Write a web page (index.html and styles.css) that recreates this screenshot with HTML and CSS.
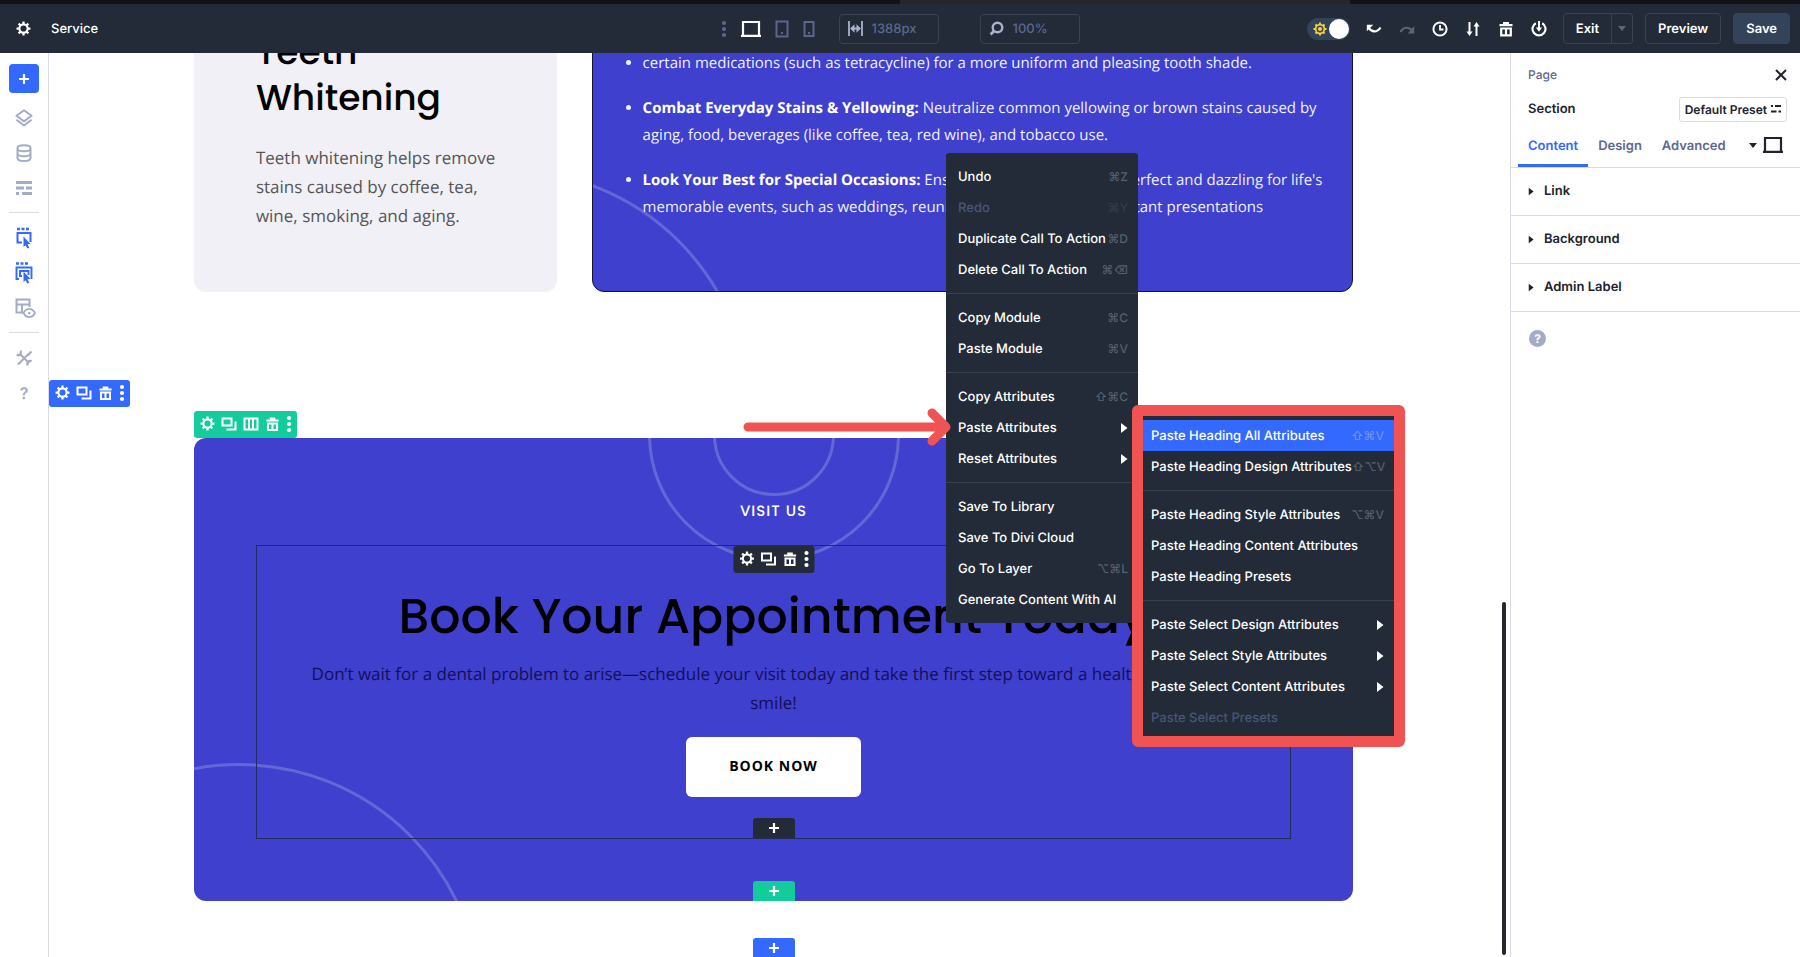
FILE: index.html
```html
<!DOCTYPE html>
<html lang="en">
<head>
    <meta charset="UTF-8">
    <meta name="viewport" content="width=device-width, initial-scale=1.0">
    <title>Service</title>
    <link rel="stylesheet" href="styles.css">
</head>
<body>
    <!-- Icon set -->
    <svg class="sprite" aria-hidden="true">
        <symbol id="gear" viewBox="0 0 16 16">
            <circle cx="8" cy="8" r="4.4" fill="none" stroke="currentColor" stroke-width="2.2"/>
            <path d="M8 .6v2.6M8 12.8v2.6M.6 8h2.6M12.8 8h2.6M2.8 2.8l1.8 1.8M11.4 11.4l1.8 1.8M13.2 2.8l-1.8 1.8M4.6 11.4l-1.8 1.8" stroke="currentColor" stroke-width="2.4"/>
        </symbol>
        <symbol id="copy" viewBox="0 0 16 16">
            <path d="M1.5 2.5h9v7h-9zM5.5 13.5h9V5.5" fill="none" stroke="currentColor" stroke-width="2"/>
        </symbol>
        <symbol id="trash" viewBox="0 0 16 16">
            <path d="M1.5 4.2h13M5 2.2h6M3.2 7.5h9.6v6.8H3.2zM8 7.5v6.8" fill="none" stroke="currentColor" stroke-width="2.2"/>
        </symbol>
        <symbol id="columns" viewBox="0 0 16 16">
            <path d="M1.5 2.5h13v11h-13zM6 2.5v11M10 2.5v11" fill="none" stroke="currentColor" stroke-width="2"/>
        </symbol>
        <symbol id="dots" viewBox="0 0 6 18">
            <circle cx="3" cy="3" r="2.1" fill="currentColor"/>
            <circle cx="3" cy="9" r="2.1" fill="currentColor"/>
            <circle cx="3" cy="15" r="2.1" fill="currentColor"/>
        </symbol>
        <symbol id="plus" viewBox="0 0 12 12">
            <path d="M6 1v10M1 6h10" stroke="currentColor" stroke-width="2.2"/>
        </symbol>
        <symbol id="laptop" viewBox="0 0 20 18">
            <path d="M2 15V2h16v13M0 15.8h20" fill="none" stroke="currentColor" stroke-width="2.2"/>
        </symbol>
        <symbol id="caret" viewBox="0 0 8 10">
            <path d="M1 0l6.500 5L1 10z" fill="currentColor"/>
        </symbol>
    </svg>

    <div class="browser-strip"><span class="browser-tab"></span></div>

    <header class="topbar">
        <div class="topbar-left">
            <button class="icon-btn" aria-label="Settings"><svg width="15" height="15"><use href="#gear"/></svg></button>
            <span class="page-name">Service</span>
        </div>

        <div class="topbar-center">
            <div class="devices">
                <button class="icon-btn muted" aria-label="More"><svg width="6" height="18"><use href="#dots"/></svg></button>
                <button class="icon-btn" aria-label="Desktop"><svg width="20" height="18"><use href="#laptop"/></svg></button>
                <button class="icon-btn muted" aria-label="Tablet">
                    <svg width="14" height="18" viewBox="0 0 14 18"><path d="M1.500 1.500h11v15h-11z" fill="none" stroke="currentColor" stroke-width="2"/><path d="M6 13h2" stroke="currentColor" stroke-width="2"/></svg>
                </button>
                <button class="icon-btn muted" aria-label="Phone">
                    <svg width="12" height="18" viewBox="0 0 12 18"><path d="M1.500 2h9v14h-9z" fill="none" stroke="currentColor" stroke-width="2"/><path d="M5 13h2" stroke="currentColor" stroke-width="2"/></svg>
                </button>
            </div>
            <label class="field">
                <svg width="15" height="15" viewBox="0 0 15 15"><path d="M1 0v15M14 0v15M3 7.500h9" stroke="currentColor" stroke-width="1.800"/><path d="M6.500 3.200v8.600L2.200 7.500zM8.500 3.200v8.600l4.300-4.300z" fill="currentColor"/></svg>
                <input type="text" value="1388px" aria-label="Canvas width">
            </label>
            <label class="field zoom-field">
                <svg width="15" height="15" viewBox="0 0 15 15"><circle cx="8.500" cy="6.500" r="4.800" fill="none" stroke="currentColor" stroke-width="2.400"/><path d="M5.200 9.800L1.600 13.400" stroke="currentColor" stroke-width="2.800"/></svg>
                <input type="text" value="100%" aria-label="Zoom">
            </label>
        </div>

        <div class="topbar-right">
            <label class="theme-toggle">
                <input type="checkbox" aria-label="Light mode" checked>
                <svg width="14" height="14" viewBox="0 0 16 16"><circle cx="8" cy="8" r="5" fill="none" stroke="#f5d13a" stroke-width="2"/><circle cx="8" cy="8" r="2.4" fill="#f5d13a"/><path d="M8 .6v2.6M8 12.8v2.6M.6 8h2.6M12.8 8h2.6M2.8 2.8l1.8 1.8M11.4 11.4l1.8 1.8M13.2 2.8l-1.8 1.8M4.6 11.4l-1.8 1.8" stroke="#f5d13a" stroke-width="2.2"/></svg>
            </label>
            <div class="actions">
                <button class="icon-btn" aria-label="Undo"><svg width="16" height="16" viewBox="0 0 16 16"><path d="M2.500 6.500c3 5 8.500 5.500 12 0" fill="none" stroke="currentColor" stroke-width="2.300"/><path d="M.8 3.800h6.500L.8 10.300z" fill="currentColor"/></svg></button>
                <button class="icon-btn faded" aria-label="Redo"><svg width="16" height="16" viewBox="0 0 16 16"><path d="M1.500 11c3-5.500 8.500-5.500 12-1" fill="none" stroke="currentColor" stroke-width="2.200"/><path d="M15.200 5v7.500H8.700z" fill="currentColor"/></svg></button>
                <button class="icon-btn" aria-label="History"><svg width="16" height="16" viewBox="0 0 16 16"><circle cx="8" cy="8" r="6.600" fill="none" stroke="currentColor" stroke-width="2"/><path d="M8 4v4.500h3.500" fill="none" stroke="currentColor" stroke-width="1.800"/></svg></button>
                <button class="icon-btn" aria-label="Portability"><svg width="16" height="16" viewBox="0 0 16 16"><path d="M4.500 1v11M11.500 15V4" stroke="currentColor" stroke-width="2"/><path d="M1.500 10.500h6l-3 4.500zM8.500 5.500h6l-3-4.500z" fill="currentColor"/></svg></button>
                <button class="icon-btn" aria-label="Clear layout"><svg width="16" height="16"><use href="#trash"/></svg></button>
                <button class="icon-btn" aria-label="Power"><svg width="16" height="16" viewBox="0 0 16 16"><path d="M4.800 2.200a6.500 6.500 0 1 0 6.400 0" fill="none" stroke="currentColor" stroke-width="2.200"/><path d="M8 0v8" stroke="currentColor" stroke-width="2"/><path d="M4.800 6.500h6.400L8 10.800z" fill="currentColor"/></svg></button>
            </div>
            <div class="split-btn">
                <button class="bar-btn">Exit</button>
                <button class="bar-btn arrow-btn" aria-label="Exit options"><svg width="8" height="5" viewBox="0 0 8 5"><path d="M0 0h8L4 5z" fill="currentColor"/></svg></button>
            </div>
            <button class="bar-btn">Preview</button>
            <button class="bar-btn save-btn">Save</button>
        </div>
    </header>

    <div class="workspace">
        <nav class="sidebar">
            <button class="add-btn" aria-label="Add"><svg width="12" height="12"><use href="#plus"/></svg></button>
            <div class="side-group">
                <button class="icon-btn" aria-label="Layers"><svg width="18" height="18" viewBox="0 0 18 18"><path d="M9 1.200l7.500 5.600L9 12.400 1.500 6.800zM1.500 10.800L9 16.500l7.500-5.700" fill="none" stroke="currentColor" stroke-width="2" stroke-linejoin="round"/></svg></button>
                <button class="icon-btn" aria-label="Data"><svg width="18" height="18" viewBox="0 0 18 18"><path d="M2.500 4v10c0 4 13 4 13 0V4c0-3.700-13-3.700-13 0zM2.500 5c1 3 12 3 13 0M2.500 10c1 3 12 3 13 0" fill="none" stroke="currentColor" stroke-width="2"/></svg></button>
                <button class="icon-btn" aria-label="Presets"><svg width="18" height="18" viewBox="0 0 18 18"><path d="M1 3.500h16M1 9h8M11 9h6M1 14.500h3M7 14.500h10" stroke="currentColor" stroke-width="3"/></svg></button>
            </div>
            <hr>
            <div class="side-group">
                <button class="icon-btn active" aria-label="Select element"><svg width="18" height="22" viewBox="0 0 18 22"><path d="M2 2h3M6.500 2h3M11 2h3" stroke="currentColor" stroke-width="2.600"/><path d="M7 15.500H2.500V6h13v9" fill="none" stroke="currentColor" stroke-width="2"/><path d="M8.500 9.500l7 7.500-3 .3 1.800 3.400-2 .9-1.700-3.400-2.100 1.700z" fill="currentColor"/></svg></button>
                <button class="icon-btn active" aria-label="Select parent"><svg width="18" height="22" viewBox="0 0 18 22"><path d="M1 1.500h3M5.500 1.500h3M10 1.500h3" stroke="currentColor" stroke-width="2.600"/><path d="M4 17H1.500V5.500h15V17M7 14H5V9h8.500v4" fill="none" stroke="currentColor" stroke-width="1.900"/><path d="M8.500 9.500l7 7.500-3 .3 1.800 3.400-2 .9-1.700-3.400-2.100 1.700z" fill="currentColor"/></svg></button>
                <button class="icon-btn" aria-label="View"><svg width="24" height="22" viewBox="0 0 24 22"><path d="M11 15.500H4.500V2.500h13V10M4.500 7.500h13M10 7.500v8" fill="none" stroke="currentColor" stroke-width="2"/><path d="M11.500 16c3-5.500 8.500-5.500 11.500 0-3 5.500-8.500 5.500-11.500 0z" fill="none" stroke="currentColor" stroke-width="1.800"/><circle cx="17.200" cy="16" r="1.300" fill="currentColor"/></svg></button>
            </div>
            <hr>
            <div class="side-group">
                <button class="icon-btn" aria-label="Tools"><svg width="18" height="18" viewBox="0 0 18 18"><path d="M5 5l9 9M3 15.500L13.500 5" stroke="currentColor" stroke-width="2"/><path d="M1.800 5.500c2 1.500 4.800 0 4-4M16.500 12.500c-2-1.500-4.800 0-4 4M12.500 6.500l4-4" fill="none" stroke="currentColor" stroke-width="2.200"/></svg></button>
                <button class="icon-btn help-btn" aria-label="Help">?</button>
            </div>
        </nav>

        <main class="canvas">
            <section class="services">
                <article class="card">
                    <h3>Teeth Whitening</h3>
                    <p>Teeth whitening helps remove stains caused by coffee, tea, wine, smoking, and aging.</p>
                </article>
                <article class="card card-blue">
                    <span class="ring ring-card"></span>
                    <ul>
                        <li>certain medications (such as tetracycline) for a more uniform and pleasing tooth shade.</li>
                        <li><strong>Combat Everyday Stains &amp; Yellowing:</strong> Neutralize common yellowing or brown stains caused by aging, food, beverages (like coffee, tea, red wine), and tobacco use.</li>
                        <li><strong>Look Your Best for Special Occasions:</strong> Ensure your smile is picture-perfect and dazzling for life's memorable events, such as weddings, reunions, graduations, or important presentations</li>
                    </ul>
                </article>
            </section>

            <section class="booking">
                <div class="tools tools-section">
                    <button aria-label="Section settings"><svg width="15" height="15"><use href="#gear"/></svg></button>
                    <button aria-label="Duplicate section"><svg width="16" height="16"><use href="#copy"/></svg></button>
                    <button aria-label="Delete section"><svg width="15" height="16"><use href="#trash"/></svg></button>
                    <button aria-label="More"><svg width="6" height="18"><use href="#dots"/></svg></button>
                </div>

                <div class="row">
                    <div class="tools tools-row">
                        <button aria-label="Row settings"><svg width="15" height="15"><use href="#gear"/></svg></button>
                        <button aria-label="Duplicate row"><svg width="16" height="16"><use href="#copy"/></svg></button>
                        <button aria-label="Column structure"><svg width="16" height="16"><use href="#columns"/></svg></button>
                        <button aria-label="Delete row"><svg width="15" height="16"><use href="#trash"/></svg></button>
                        <button aria-label="More"><svg width="6" height="18"><use href="#dots"/></svg></button>
                    </div>
                    <div class="rings">
                        <span class="ring ring-small"></span>
                        <span class="ring ring-medium"></span>
                        <span class="ring ring-corner"></span>
                    </div>

                    <p class="eyebrow">VISIT US</p>
                    <div class="module">
                        <div class="tools tools-module">
                            <button aria-label="Module settings"><svg width="15" height="15"><use href="#gear"/></svg></button>
                            <button aria-label="Duplicate module"><svg width="16" height="16"><use href="#copy"/></svg></button>
                            <button aria-label="Delete module"><svg width="15" height="16"><use href="#trash"/></svg></button>
                            <button aria-label="More"><svg width="6" height="18"><use href="#dots"/></svg></button>
                        </div>
                        <h2>Book Your Appointment Today</h2>
                        <p>Don’t wait for a dental problem to arise—schedule your visit today and take the first step toward a healthier, brighter smile!</p>
                        <a class="book-btn" href="#">BOOK NOW</a>
                        <button class="add-tab add-module" aria-label="Add module"><svg width="12" height="12"><use href="#plus"/></svg></button>
                    </div>
                    <button class="add-tab add-row" aria-label="Add row"><svg width="12" height="12"><use href="#plus"/></svg></button>
                </div>
                <button class="add-tab add-section" aria-label="Add section"><svg width="12" height="12"><use href="#plus"/></svg></button>
            </section>

            <div class="scroll-thumb"></div>
        </main>

        <aside class="panel">
            <div class="panel-head">
                <a href="#">Page</a>
                <button class="icon-btn" aria-label="Close"><svg width="12" height="12" viewBox="0 0 12 12"><path d="M1 1l10 10M11 1L1 11" stroke="currentColor" stroke-width="2"/></svg></button>
            </div>
            <div class="panel-title">
                <h1>Section</h1>
                <button class="preset-btn">Default Preset
                    <svg width="10" height="10" viewBox="0 0 10 10"><path d="M0 2h2M4 2h6M0 7.500h5.500M7.500 7.500H10" stroke="currentColor" stroke-width="2"/></svg>
                </button>
            </div>
            <div class="tabs">
                <button class="tab active">Content</button>
                <button class="tab">Design</button>
                <button class="tab">Advanced</button>
                <button class="icon-btn view-btn" aria-label="Breakpoint">
                    <svg width="8" height="5" viewBox="0 0 8 5"><path d="M0 0h8L4 5z" fill="currentColor"/></svg>
                    <svg width="20" height="18"><use href="#laptop"/></svg>
                </button>
            </div>
            <button class="option"><svg width="6" height="9"><use href="#caret"/></svg>Link</button>
            <button class="option"><svg width="6" height="9"><use href="#caret"/></svg>Background</button>
            <button class="option"><svg width="6" height="9"><use href="#caret"/></svg>Admin Label</button>
            <button class="panel-help" aria-label="Help">?</button>
        </aside>
    </div>

    <div class="menu">
        <button>Undo <kbd>⌘Z</kbd></button>
        <button disabled>Redo <kbd>⌘Y</kbd></button>
        <button>Duplicate Call To Action <kbd>⌘D</kbd></button>
        <button>Delete Call To Action <kbd>⌘⌫</kbd></button>
        <hr>
        <button>Copy Module <kbd>⌘C</kbd></button>
        <button>Paste Module <kbd>⌘V</kbd></button>
        <hr>
        <button>Copy Attributes <kbd>⇧⌘C</kbd></button>
        <button>Paste Attributes <svg width="8" height="10"><use href="#caret"/></svg></button>
        <button>Reset Attributes <svg width="8" height="10"><use href="#caret"/></svg></button>
        <hr>
        <button>Save To Library</button>
        <button>Save To Divi Cloud</button>
        <button>Go To Layer <kbd>⌥⌘L</kbd></button>
        <button>Generate Content With AI</button>
    </div>

    <div class="menu submenu">
        <button class="selected">Paste Heading All Attributes <kbd>⇧⌘V</kbd></button>
        <button>Paste Heading Design Attributes <kbd>⇧⌥V</kbd></button>
        <hr>
        <button>Paste Heading Style Attributes <kbd>⌥⌘V</kbd></button>
        <button>Paste Heading Content Attributes</button>
        <button>Paste Heading Presets</button>
        <hr>
        <button>Paste Select Design Attributes <svg width="8" height="10"><use href="#caret"/></svg></button>
        <button>Paste Select Style Attributes <svg width="8" height="10"><use href="#caret"/></svg></button>
        <button>Paste Select Content Attributes <svg width="8" height="10"><use href="#caret"/></svg></button>
        <button disabled>Paste Select Presets</button>
    </div>

    <svg class="arrow" width="208" height="40" viewBox="0 0 208 40" aria-hidden="true">
        <path d="M5 20h196M189 6l14 14-14 14" fill="none" stroke="#f05452" stroke-width="9" stroke-linecap="round" stroke-linejoin="round"/>
    </svg>
</body>
</html>
```
FILE: styles.css
```css
* {
    box-sizing: border-box;
}

body {
    margin: 0;
    height: 100vh;
    display: flex;
    flex-direction: column;
    overflow: hidden;
    position: relative;
    font-family: Inter, "Liberation Sans", sans-serif;
    font-size: 13px;
    font-weight: 500;
    color: #20232b;
    background: #fff;
    text-rendering: geometricPrecision;
}

button,
input {
    font: inherit;
    color: inherit;
    background: none;
    border: 0;
    padding: 0;
    margin: 0;
    text-rendering: inherit;
}

button {
    cursor: pointer;
}

h1, h2, h3, p, ul {
    margin: 0;
}

svg {
    display: block;
    flex: none;
}

.sprite {
    position: absolute;
    width: 0;
    height: 0;
}

.icon-btn {
    display: flex;
    align-items: center;
    justify-content: center;
}

/* Top bar */
.browser-strip {
    height: 4px;
    flex: none;
    background: #121217;
    display: flex;
    justify-content: center;
}

.browser-tab {
    width: 25%;
    margin-left: 25%;
    background: #26262b;
}

.topbar {
    flex: none;
    height: 49px;
    padding: 0 10px;
    background: #222b37;
    color: #fff;
    display: grid;
    grid-template-columns: 1fr auto 1fr;
    align-items: center;
}

.topbar-left {
    display: flex;
    align-items: center;
    gap: 20px;
    padding-left: 6px;
}

.topbar-center {
    display: flex;
    align-items: center;
    gap: 24px;
}

.devices {
    display: flex;
    align-items: center;
    gap: 14px;
}

.muted {
    color: #5b6590;
}

.faded {
    color: #5d6673;
}

.field {
    display: flex;
    align-items: center;
    gap: 9px;
    width: 100px;
    height: 30px;
    padding: 0 8px;
    border: 1px solid #3a434f;
    border-radius: 4px;
    color: #a9b2cc;
}

.field input {
    width: 100%;
    min-width: 0;
    color: #5d6790;
}

.zoom-field {
    margin-left: 17px;
}

.topbar-right {
    display: flex;
    align-items: center;
    justify-content: flex-end;
    gap: 12px;
}

.theme-toggle {
    display: flex;
    align-items: center;
    flex-direction: row-reverse;
    justify-content: space-between;
    width: 43px;
    height: 22px;
    padding: 0 1px 0 6px;
    border-radius: 11px;
    background: #33435a;
}

.theme-toggle input {
    appearance: none;
    width: 20px;
    height: 20px;
    margin: 0;
    border-radius: 50%;
    background: #fff;
}

.actions {
    display: flex;
    gap: 17px;
    margin: 0 4px;
}

.bar-btn {
    height: 31px;
    padding: 0 12px;
    border: 1px solid #3a434f;
    border-radius: 4px;
    font-weight: 600;
}

.split-btn {
    display: flex;
}

.split-btn .bar-btn:first-child {
    border-radius: 4px 0 0 4px;
}

.split-btn .arrow-btn {
    padding: 0 6px;
    border-left: 0;
    border-radius: 0 4px 4px 0;
    color: #5d6673;
}

.save-btn {
    background: #33435a;
    border-color: #33435a;
}

/* Left sidebar */
.workspace {
    flex: 1;
    min-height: 0;
    display: flex;
}

.sidebar {
    flex: none;
    width: 49px;
    padding: 11px 9px 0;
    border-right: 1px solid #d9dbe6;
    color: #a3abc7;
}

.add-btn {
    display: flex;
    align-items: center;
    justify-content: center;
    width: 30px;
    height: 29px;
    margin-bottom: 7px;
    border-radius: 4px;
    background: #3369ff;
    color: #fff;
}

.side-group .icon-btn {
    width: 30px;
    height: 35px;
}

.side-group .active {
    color: #3369ff;
}

.sidebar hr {
    margin: 7px 0;
    border: 0;
    border-top: 1px solid #d9dbe6;
}

.sidebar .help-btn {
    font-size: 16px;
    font-weight: 600;
}

/* Canvas */
.canvas {
    flex: 1;
    min-width: 0;
    position: relative;
    overflow: hidden;
    padding-right: 12px;
    font-family: "Open Sans", "Noto Sans", sans-serif;
    font-weight: 400;
}

.services {
    width: 80%;
    margin: -86px auto 0;
    padding-bottom: 88px;
    display: grid;
    grid-template-columns: 362fr 760fr;
    gap: 35px;
}

.card {
    padding: 62px 50px 62px 62px;
    border-radius: 12px;
    background: #f1f0f6;
}

.card h3 {
    margin-bottom: 22px;
    font-family: Poppins, Inter, sans-serif;
    font-size: 36px;
    line-height: 46px;
    font-weight: 500;
    color: #000;
}

.card p {
    font-size: 17px;
    line-height: 29px;
    color: #555;
}

.card-blue {
    position: relative;
    overflow: hidden;
    display: flex;
    align-items: flex-end;
    padding: 0 24px 70px 50px;
    border: 1px solid #14123a;
    background: #3f40ce;
    color: #f0f0ff;
}

.card-blue ul {
    position: relative;
    padding: 0;
    font-size: 15px;
    line-height: 27px;
}

.card-blue li + li {
    margin-top: 18px;
}

.card-blue strong {
    color: #fff;
}

.ring {
    position: absolute;
    border: 3px solid rgba(255, 255, 255, 0.2);
    border-radius: 50%;
}

.ring-card {
    width: 486px;
    height: 486px;
    left: -328px;
    bottom: -364px;
}

.booking {
    position: relative;
    padding: 58px 0 57px;
}

.row {
    position: relative;
    width: 80%;
    margin: 0 auto;
    padding: 62px;
    border-radius: 12px;
    background: #3f40ce;
    text-align: center;
}

.rings {
    position: absolute;
    inset: 0;
    overflow: hidden;
    border-radius: 12px;
}

.ring-small {
    width: 122px;
    height: 122px;
    top: -64px;
    left: calc(50% - 61px);
}

.ring-medium {
    width: 252px;
    height: 252px;
    top: -129px;
    left: calc(50% - 126px);
}

.ring-corner {
    width: 486px;
    height: 486px;
    left: -198px;
    bottom: -348px;
}

.eyebrow {
    position: relative;
    margin-bottom: 21px;
    font-family: Poppins, Inter, sans-serif;
    font-size: 15px;
    line-height: 24px;
    font-weight: 500;
    letter-spacing: 1px;
    color: #fff;
}

.module {
    position: relative;
    padding: 42px 50px 41px;
    border: 1px solid #222b5e;
}

.module h2 {
    margin-bottom: 12px;
    font-family: Poppins, Inter, sans-serif;
    font-size: 49px;
    line-height: 59px;
    font-weight: 500;
    color: #000;
}

.module p {
    margin-bottom: 20px;
    font-size: 17px;
    line-height: 29px;
    color: #130f59;
}

.book-btn {
    display: inline-block;
    padding: 0 43px;
    border-radius: 6px;
    background: #fff;
    color: #000;
    font-size: 14px;
    line-height: 60px;
    font-weight: 700;
    letter-spacing: 1px;
    text-decoration: none;
    vertical-align: top;
}

/* Floating element controls */
.tools {
    position: absolute;
    display: flex;
    align-items: center;
    gap: 6px;
    height: 27px;
    padding: 0 5px 2px 6px;
    border-radius: 3px;
    color: #fff;
}

.tools-section {
    top: 0;
    left: 0;
    background: #3369ff;
}

.tools-row {
    bottom: 100%;
    left: 0;
    background: #12cc9c;
}

.tools-module {
    top: 0;
    left: 50%;
    transform: translateX(-50%);
    background: #222b37;
}

.add-tab {
    position: absolute;
    bottom: 0;
    left: 50%;
    transform: translateX(-50%);
    display: flex;
    align-items: center;
    justify-content: center;
    width: 42px;
    height: 20px;
    border-radius: 3px 3px 0 0;
    color: #fff;
}

.add-module {
    background: #222b37;
}

.add-row {
    background: #12cc9c;
}

.add-section {
    background: #3369ff;
}

.scroll-thumb {
    position: absolute;
    right: 4px;
    bottom: 2px;
    width: 4px;
    height: 39%;
    border-radius: 2px;
    background: #25262e;
}

/* Settings panel */
.panel {
    flex: none;
    width: 290px;
    border-left: 1px solid #d9dbe6;
}

.panel-head,
.panel-title {
    display: flex;
    align-items: center;
    justify-content: space-between;
    padding: 0 13px 0 17px;
}

.panel-head {
    height: 34px;
    padding-top: 9px;
}

.panel-head a {
    color: #5c6890;
    font-size: 12px;
    text-decoration: none;
}

.panel-title {
    height: 44px;
}

.panel-title h1 {
    font-size: 13px;
    font-weight: 600;
}

.preset-btn {
    display: flex;
    align-items: center;
    gap: 4px;
    height: 25px;
    padding: 0 5px;
    border: 1px solid #d9dbe6;
    border-radius: 3px;
    font-size: 12px;
    font-weight: 600;
}

.tabs {
    display: flex;
    height: 37px;
    padding-left: 7px;
    border-bottom: 1px solid #d9dbe6;
}

.tab {
    padding: 0 10px 4px;
    color: #5c6890;
    font-weight: 600;
    border-bottom: 3px solid transparent;
}

.tab.active {
    color: #3369ff;
    border-color: #3369ff;
}

.view-btn {
    gap: 6px;
    margin: 0 17px 8px auto;
}

.option {
    display: flex;
    align-items: center;
    gap: 10px;
    width: 100%;
    height: 48px;
    padding: 0 17px 1px;
    border-bottom: 1px solid #d9dbe6;
    font-weight: 600;
}

.panel-help {
    display: block;
    width: 17px;
    height: 17px;
    margin: 18px;
    border-radius: 50%;
    background: #a3abc7;
    color: #fff;
    font-size: 12px;
    font-weight: 700;
    line-height: 17px;
}

/* Context menus */
.menu {
    position: absolute;
    top: 153px;
    left: 946px;
    width: 192px;
    padding: 8px 0;
    border-radius: 3px;
    background: #222b37;
    color: #fff;
}

.menu button {
    display: flex;
    align-items: center;
    justify-content: space-between;
    width: 100%;
    height: 31px;
    padding: 0 10px 0 12px;
    font-weight: 500;
    white-space: nowrap;
}

.menu hr {
    margin: 8px 0;
    border: 0;
    border-top: 1px solid #38424f;
}

.menu kbd {
    font-family: Inter, "DejaVu Sans", sans-serif;
    font-size: 12px;
    color: #56606e;
}

.menu button:disabled {
    color: #4a5578;
}

.menu button:disabled kbd {
    color: #333d4a;
}

.menu .selected {
    background: #3369ff;
}

.menu .selected kbd {
    color: #6e92ee;
}

.submenu {
    top: 405px;
    left: 1132px;
    width: 273px;
    padding: 4px 0 3px;
    border: 11px solid #f05452;
    border-radius: 6px;
}

.submenu button {
    padding-left: 8px;
}

.arrow {
    position: absolute;
    top: 407px;
    left: 743px;
}
```
